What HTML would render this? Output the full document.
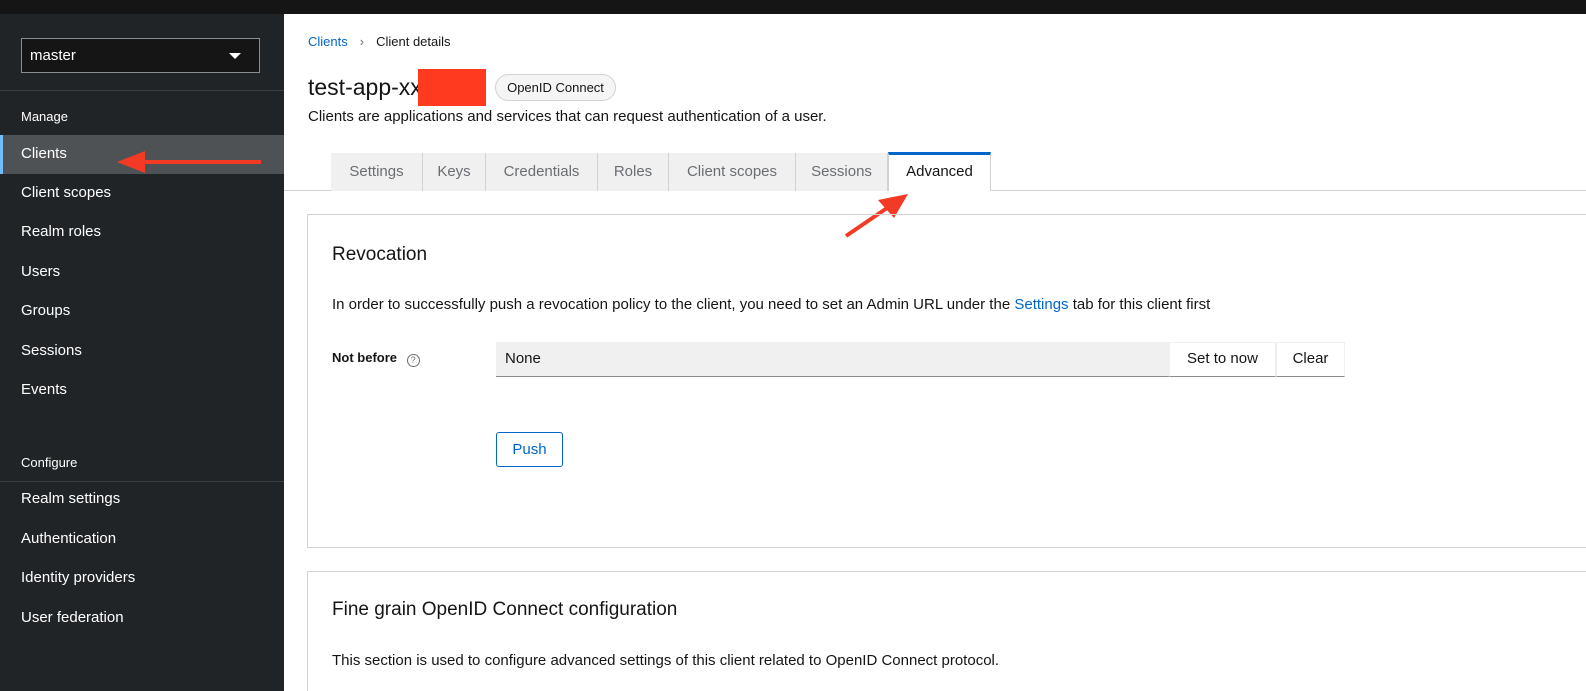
<!DOCTYPE html>
<html style="width:1586px;height:691px;overflow:hidden"><head><style>
*{box-sizing:border-box;margin:0;padding:0}
body{width:1586px;height:691px;overflow:hidden;font-family:"Liberation Sans",sans-serif;background:#fff;position:relative;color:#151515}
.top{position:absolute;left:0;top:0;width:1586px;height:14px;background:#151515}
.side{position:absolute;left:0;top:14px;width:284px;height:677px;background:#212427;color:#fff}
.sel{position:absolute;left:21px;top:24px;width:239px;height:35px;border:1px solid #8a8d90;background:#151515;font-size:15px;padding:8px 8px}
.sel:after{content:"";position:absolute;right:18px;top:14px;border:6px solid transparent;border-top:6px solid #fff;border-bottom:0}
.hr{position:absolute;left:0;width:284px;height:1px;background:#3c3f42}
.it{position:absolute;left:0;width:284px;height:39px;padding:10px 21px;font-size:15px}
.grp{position:absolute;left:21px;font-size:13px}
.abs{position:absolute}
.tab{position:absolute;height:38px;background:#f0f0f0;border-right:1px solid #d2d2d2;color:#6a6e73;font-size:15px;text-align:center;padding-top:10px}
.card{position:absolute;left:307px;width:1300px;border:1px solid #d2d2d2}
</style></head><body>
<div class="top"></div>
<div class="side">
<div class="sel">master</div>
<div class="hr" style="top:76px"></div>
<div class="grp" style="top:95px">Manage</div>
<div class="it" style="top:121px;background:#4f5255;border-left:3px solid #73bcf7;padding-left:18px">Clients</div>
<div class="it" style="top:160px">Client scopes</div>
<div class="it" style="top:199px">Realm roles</div>
<div class="it" style="top:239px">Users</div>
<div class="it" style="top:278px">Groups</div>
<div class="it" style="top:318px">Sessions</div>
<div class="it" style="top:357px">Events</div>
<div class="grp" style="top:441px">Configure</div>
<div class="hr" style="top:467px"></div>
<div class="it" style="top:466px">Realm settings</div>
<div class="it" style="top:506px">Authentication</div>
<div class="it" style="top:545px">Identity providers</div>
<div class="it" style="top:585px">User federation</div>
<svg class="abs" style="left:115px;top:135px" width="150" height="24"><path d="M146 13H30" stroke="#f23a24" stroke-width="4"/><path d="M2 13L30 2V24Z" fill="#f23a24"/></svg>
</div>
<div class="abs" style="left:308px;top:34px;font-size:13px"><span style="color:#06c">Clients</span><span style="color:#6a6e73;margin:0 12px">›</span>Client details</div>
<div class="abs" style="left:308px;top:74px;font-size:23px">test-app-<span>xxxxx</span></div>
<div class="abs" style="left:418px;top:69px;width:68px;height:37px;background:#ff3a1f"></div>
<div class="abs" style="left:495px;top:74px;width:121px;height:27px;border:1px solid #d2d2d2;border-radius:14px;background:#f5f5f5;font-size:13px;text-align:center;padding-top:5px">OpenID Connect</div>
<div class="abs" style="left:308px;top:108px;font-size:15px">Clients are applications and services that can request authentication of a user.</div>
<div class="abs" style="left:284px;top:190px;width:1302px;height:1px;background:#d2d2d2"></div>
<div class="tab" style="left:331px;top:153px;width:92px">Settings</div>
<div class="tab" style="left:423px;top:153px;width:63px">Keys</div>
<div class="tab" style="left:486px;top:153px;width:112px">Credentials</div>
<div class="tab" style="left:598px;top:153px;width:71px">Roles</div>
<div class="tab" style="left:669px;top:153px;width:127px">Client scopes</div>
<div class="tab" style="left:796px;top:153px;width:92px">Sessions</div>
<div class="tab" style="left:888px;top:152px;width:103px;height:39px;background:#fff;color:#151515;border-top:3px solid #06c;border-left:1px solid #d2d2d2;padding-top:8px">Advanced</div>
<svg class="abs" style="left:840px;top:192px" width="70" height="50"><path d="M6 44L50 14" stroke="#f23a24" stroke-width="4"/><path d="M68 2L38 8L54 26Z" fill="#f23a24"/></svg>
<div class="card" style="top:214px;height:334px"></div>
<div class="abs" style="left:332px;top:244px;font-size:19px">Revocation</div>
<div class="abs" style="left:332px;top:296px;font-size:15px">In order to successfully push a revocation policy to the client, you need to set an Admin URL under the <span style="color:#06c">Settings</span> tab for this client first</div>
<div class="abs" style="left:332px;top:350px;font-size:13px;font-weight:bold">Not before <span style="display:inline-block;width:13px;height:13px;border:1.3px solid #6a6e73;border-radius:50%;font-size:9px;color:#6a6e73;text-align:center;line-height:11px;margin-left:6px;font-weight:normal;vertical-align:-1px">?</span></div>
<div class="abs" style="left:496px;top:342px;width:673px;height:35px;background:#f0f0f0;border-bottom:1px solid #8a8d90;font-size:15px;padding:8px 9px">None</div>
<div class="abs" style="left:1169px;top:342px;width:107px;height:35px;border:1px solid #f0f0f0;border-bottom:1px solid #8a8d90;font-size:15px;text-align:center;padding-top:7px">Set to now</div>
<div class="abs" style="left:1276px;top:342px;width:69px;height:35px;border:1px solid #f0f0f0;border-bottom:1px solid #8a8d90;font-size:15px;text-align:center;padding-top:7px">Clear</div>
<div class="abs" style="left:496px;top:432px;width:67px;height:35px;border:1px solid #06c;border-radius:3px;color:#06c;font-size:15px;text-align:center;padding-top:8px">Push</div>
<div class="card" style="top:571px;height:120px;border-bottom:0"></div>
<div class="abs" style="left:332px;top:599px;font-size:19px">Fine grain OpenID Connect configuration</div>
<div class="abs" style="left:332px;top:652px;font-size:15px">This section is used to configure advanced settings of this client related to OpenID Connect protocol.</div>
</body></html>
